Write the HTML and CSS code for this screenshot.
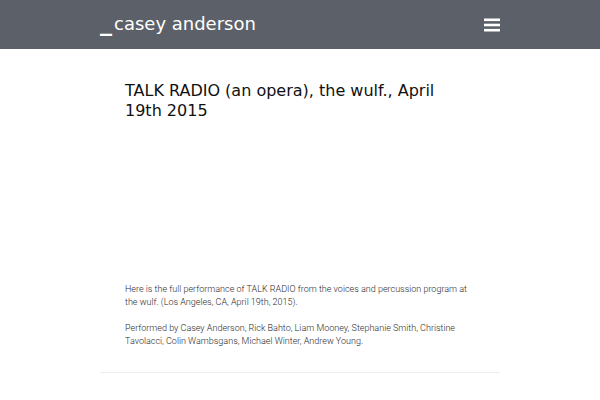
FILE: index.html
```html
<!DOCTYPE html>
<html>
<head>
<meta charset="utf-8">
<link rel="stylesheet" href="styles.css">
</head>
<body>
<header class="topbar">
  <div class="topbar-inner">
    <a class="brand" href="#"><span class="brand-mark">_</span>casey anderson</a>
    <button class="menu-btn" aria-label="menu">
      <svg width="16" height="14" viewBox="0 0 16 14"><rect x="0" y="0.5" width="16" height="2.6" fill="#fff"/><rect x="0" y="5.7" width="16" height="2.6" fill="#fff"/><rect x="0" y="10.9" width="16" height="2.6" fill="#fff"/></svg>
    </button>
  </div>
</header>
<main class="wrap">
  <article class="post">
    <h1 class="post-title">TALK RADIO (an opera), the wulf., April 19th 2015</h1>
    <div class="embed"></div>
    <div class="post-body">
      <p>Here is the full performance of TALK RADIO from the voices and percussion program at the wulf. (Los Angeles, CA, April 19th, 2015).</p>
      <p>Performed by Casey Anderson, Rick Bahto, Liam Mooney, Stephanie Smith, Christine Tavolacci, Colin Wambsgans, Michael Winter, Andrew Young.</p>
    </div>
  </article>
  <hr class="sep">
</main>
</body>
</html>
```
FILE: styles.css
```css
html, body { margin: 0; padding: 0; background: #fff; }
body { font-family: "DejaVu Sans", sans-serif; }
.topbar { background: #5c6169; height: 49px; }
.topbar-inner { width: 400px; margin: 0 auto; height: 49px; display: flex; align-items: center; justify-content: space-between; }
.brand { color: #fff; text-decoration: none; font-size: 18px; line-height: 20px; margin-top: -3px; display: flex; align-items: baseline; }
.brand-mark { font-size: 24px; font-weight: bold; line-height: 20px; margin-right: 2px; }
.menu-btn { background: none; border: 0; padding: 0; margin-right: 0; width: 16px; height: 14px; display: flex; }
.wrap { width: 400px; margin: 0 auto; }
.post { padding: 32px 25px 0; }
.post-title { font-weight: normal; font-size: 16px; line-height: 20px; margin: 0; color: #111; }
.embed { height: 162px; }
.post-body { font-family: "Roboto", sans-serif; font-weight: 300; font-size: 9px; line-height: 13px; color: #2a2a2a; }
.post-body p { margin: 0 0 13px; }
.sep { border: 0; height: 1px; background: #eee; box-shadow: 0 1px 2px rgba(0,0,0,0.06); margin: 24px 0 0; }
```
